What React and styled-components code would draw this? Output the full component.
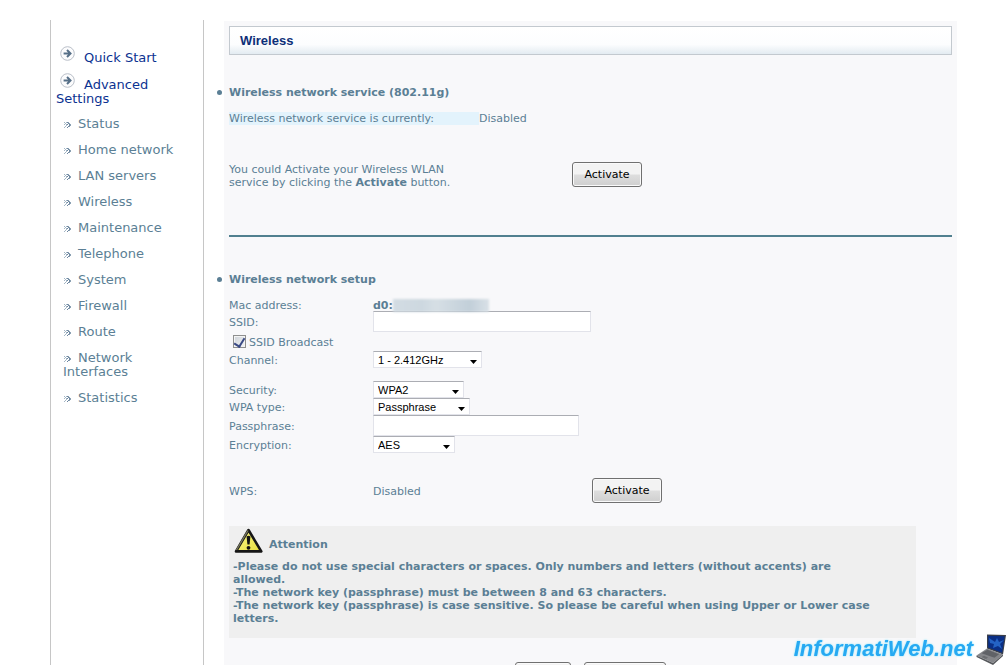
import styled, { createGlobalStyle } from "styled-components";

const MENU = [
  "Status",
  "Home network",
  "LAN servers",
  "Wireless",
  "Maintenance",
  "Telephone",
  "System",
  "Firewall",
  "Route",
  "Network Interfaces",
  "Statistics",
];

const CircleArrow = () => (
  <CircleIcon width="15" height="15" viewBox="0 0 15 15" aria-hidden="true">
    <circle cx="7.5" cy="7.5" r="6.8" fill="#fcfcfd" stroke="#b9bfc8" />
    <path
      d="M3.6 7.5h6M7 4l3.500 3.500L7 11"
      fill="none"
      stroke="#566f87"
      strokeWidth="2"
    />
  </CircleIcon>
);

const Chevrons = () => (
  <ChevronIcon width="7" height="6" viewBox="0 0 7 6" aria-hidden="true">
    <path
      d="M0 0h1v1H0zM1 1h1v1H1zM2 2h1v2H2zM1 4h1v1H1zM0 5h1v1H0zM2 0h1v1H2zM0 2h1v1H0z"
      fill="#a3b6c5"
    />
    <path
      d="M3 0h1v1H3zM4 1h1v1H4zM5 2h1v2H5zM4 4h1v1H4zM3 5h1v1H3zM3 2h1v1H3z"
      fill="#6c86a0"
    />
    <path d="M4 0h1v1H4zM5 1h1v1H5zM6 2h1v2H6zM5 4h1v1H5z" fill="#8ba1b3" />
  </ChevronIcon>
);

const WarningIcon = () => (
  <svg width="30" height="26" viewBox="0 0 30 26" aria-hidden="true">
    <defs>
      <linearGradient id="warn" x1="0" y1="0" x2="1" y2="1">
        <stop offset="0" stopColor="#fbf98c" />
        <stop offset="1" stopColor="#e6dc3c" />
      </linearGradient>
    </defs>
    <path
      d="M14.5 2L27.3 23.4H2z"
      fill="url(#warn)"
      stroke="#161616"
      strokeWidth="2.6"
      strokeLinejoin="round"
    />
    <path d="M14 2.500L2.500 22" stroke="#77775f" strokeWidth="1.4" fill="none" />
    <path d="M12.600 8.500q1.900-1.600 3.800 0l-.8 8h-2.200z" fill="#111" />
    <circle cx="14.5" cy="19.8" r="1.9" fill="#111" />
  </svg>
);

const Laptop = () => (
  <svg width="32" height="32" viewBox="0 0 32 32" aria-hidden="true">
    <path d="M12 1.500L31 2l-3 19.500-16-6z" fill="#3b3f49" />
    <path d="M13.200 2.800l16.500.5-2.600 16.400-13.900-5.200z" fill="#0a2f86" />
    <path d="M14 5l6 4 2-4 2 4 5-2-4 4 2 5-4-3-5 2 1-4-4-1z" fill="#2463c4" />
    <path d="M12 15.500l16 6L18 30 1.500 22.500z" fill="#85868a" />
    <path d="M12.500 16.800l11.500 4.500-4.500 3.500-13-4.600z" fill="#606267" />
    <path d="M9 22.800l4 1.700-2 1.500-4.500-2z" fill="#6a6c70" />
    <path d="M1.500 22.500L18 30l10-8.500v1.500L18 32 1.500 24z" fill="#55575b" />
  </svg>
);

const Dropdown = ({ id, width, options }) => (
  <SelectWrap $width={width}>
    <Select id={id}>
      {options.map((option) => (
        <option key={option}>{option}</option>
      ))}
    </Select>
    <svg width="7" height="4" viewBox="0 0 7 4" aria-hidden="true">
      <path d="M0 0h7L3.500 4z" fill="#000" />
    </svg>
  </SelectWrap>
);

const App = () => (
  <>
    <GlobalStyle />
    <Page>
      <Sidebar>
        <MainMenu>
          <li>
            <MainLink href="#quick">
              <CircleArrow />
              Quick Start
            </MainLink>
          </li>
          <li>
            <MainLink href="#advanced">
              <CircleArrow />
              Advanced Settings
            </MainLink>
          </li>
        </MainMenu>
        <SubMenu>
          {MENU.map((label) => (
            <li key={label}>
              <SubLink href="#menu">
                <Chevrons />
                {label}
              </SubLink>
            </li>
          ))}
        </SubMenu>
      </Sidebar>

      <Content>
        <TitleBar>Wireless</TitleBar>

        <Service>
          <Heading>Wireless network service (802.11g)</Heading>
          <Status>
            <StatusLabel>Wireless network service is currently:</StatusLabel>
            <span>Disabled</span>
          </Status>
          <ActivateRow>
            <Hint>
              You could Activate your Wireless WLAN service by clicking the{" "}
              <b>Activate</b> button.
            </Hint>
            <Button type="button">Activate</Button>
          </ActivateRow>
        </Service>

        <Divider />

        <Setup>
          <Heading>Wireless network setup</Heading>
          <Row $height={12}>
            <span>Mac address:</span>
            <Mac>
              d0:
              <Hidden />
            </Mac>
          </Row>
          <Row $height={21}>
            <Label htmlFor="ssid">SSID:</Label>
            <TextInput id="ssid" type="text" $width={218} />
          </Row>
          <CheckRow>
            <Checkbox id="broadcast" type="checkbox" defaultChecked />
            <Label htmlFor="broadcast">SSID Broadcast</Label>
          </CheckRow>
          <Row $height={17}>
            <Label htmlFor="channel">Channel:</Label>
            <Dropdown id="channel" width={109} options={["1 - 2.412GHz"]} />
          </Row>
          <Security>
            <Row $height={17}>
              <Label htmlFor="security">Security:</Label>
              <Dropdown id="security" width={91} options={["WPA2"]} />
            </Row>
            <Row $height={17}>
              <Label htmlFor="wpa">WPA type:</Label>
              <Dropdown id="wpa" width={97} options={["Passphrase"]} />
            </Row>
            <Row $height={21}>
              <Label htmlFor="passphrase">Passphrase:</Label>
              <TextInput id="passphrase" type="text" $width={206} />
            </Row>
            <Row $height={17}>
              <Label htmlFor="encryption">Encryption:</Label>
              <Dropdown id="encryption" width={82} options={["AES"]} />
            </Row>
          </Security>
          <WpsRow>
            <Label as="span">WPS:</Label>
            <Label as="span">Disabled</Label>
            <Button type="button">Activate</Button>
          </WpsRow>
        </Setup>

        <Notice>
          <NoticeTitle>
            <WarningIcon />
            Attention
          </NoticeTitle>
          <p>
            -Please do not use special characters or spaces. Only numbers and
            letters (without accents) are allowed.
          </p>
          <p>-The network key (passphrase) must be between 8 and 63 characters.</p>
          <p>
            -The network key (passphrase) is case sensitive. So please be careful
            when using Upper or Lower case letters.
          </p>
        </Notice>

        <Actions>
          <Button type="submit" $width={56}>
            Save
          </Button>
          <Button type="reset" $width={82}>
            Cancel
          </Button>
        </Actions>
      </Content>
    </Page>
    <Brand>
      InformatiWeb.net
      <Laptop />
    </Brand>
  </>
);

const GlobalStyle = createGlobalStyle`
  * {
    box-sizing: border-box;
  }

  html {
    scrollbar-width: none;
  }

  body {
    margin: 0;
    background: #fff;
    color: #5b7f95;
    font: 11px/13px "DejaVu Sans", Verdana, sans-serif;
  }

  ul, p, h1, h2 {
    margin: 0;
    padding: 0;
  }
`;

const Page = styled.div`
  display: flex;
  min-height: 100vh;
  padding: 20px 50px 0;
`;

const Sidebar = styled.nav`
  flex: 0 0 154px;
  margin-right: 20px;
  padding: 26px 8px 0 5px;
  border: solid #c6c6c6;
  border-width: 0 1px;
  font-size: 13px;
  line-height: 14px;
`;

const MainMenu = styled.ul`
  display: flex;
  flex-direction: column;
  gap: 8px;
  list-style: none;
`;

const SubMenu = styled.ul`
  display: flex;
  flex-direction: column;
  gap: 12px;
  margin-top: 11px;
  padding-left: 7px;
  list-style: none;
`;

const MainLink = styled.a`
  color: #0b3291;
  text-decoration: none;
`;

const SubLink = styled.a`
  color: #5b7f95;
  text-decoration: none;
`;

const CircleIcon = styled.svg`
  margin: 0 9px 0 4px;
  vertical-align: 1px;
`;

const ChevronIcon = styled.svg`
  margin: 0 7px 0 1px;
  vertical-align: 0;
`;

const Content = styled.main`
  flex: 1;
  min-width: 0;
  margin-top: 1px;
  padding: 5px 5px 20px;
  background: #f8f8fa;
`;

const TitleBar = styled.h1`
  height: 29px;
  padding-left: 10px;
  border: 1px solid #c3c9cf;
  background: linear-gradient(#fff, #fcfdfe 65%, #e3ebf1);
  color: #0d2f78;
  font: bold 13px/27px "Liberation Sans", Arial, sans-serif;
`;

const Service = styled.section`
  padding-top: 31px;
`;

const Setup = styled.section`
  padding-top: 36px;
`;

/* the bullet hangs in the gutter, left of the panel */
const Heading = styled.h2`
  position: relative;
  margin-bottom: 12px;
  font-size: 11px;
  line-height: 14px;

  &::before {
    content: "";
    position: absolute;
    top: 4px;
    left: -12px;
    width: 5px;
    height: 5px;
    border-radius: 50%;
    background: #5b7f95;
  }
`;

const Status = styled.div`
  display: flex;
`;

const StatusLabel = styled.span`
  width: 250px;
  background: #e3f3fc;
`;

const ActivateRow = styled.div`
  display: flex;
  align-items: flex-start;
  margin-top: 37px;
`;

const Hint = styled.p`
  width: 240px;
  margin-right: 103px;

  && {
    padding-top: 1px;
  }
`;

const Button = styled.button`
  width: ${({ $width = 70 }) => $width}px;
  height: 25px;
  padding: 0;
  border: 1px solid #707070;
  border-radius: 3px;
  background: linear-gradient(#f3f3f3 0 48%, #dedede 52%, #cfcfcf);
  box-shadow: inset 0 0 0 1px #fafafa;
  color: #000;
  font: 11px "DejaVu Sans", Verdana, sans-serif;
`;

const Divider = styled.hr`
  height: 2px;
  margin: 46px 0 0;
  border: 0;
  background: #51808f;
`;

const Row = styled.div`
  display: grid;
  grid-template-columns: 144px 1fr;
  align-items: center;
  height: ${({ $height }) => $height}px;
`;

const Label = styled.label`
  padding-top: 2px;
`;

const Security = styled.div`
  margin-top: 13px;
`;

const CheckRow = styled.div`
  display: flex;
  align-items: center;
  gap: 3px;
  height: 19px;
  padding-left: 4px;
`;

const WpsRow = styled.div`
  display: grid;
  grid-template-columns: 144px 219px auto;
  justify-content: start;
  align-items: center;
  margin-top: 25px;
`;

const Mac = styled.b`
  display: flex;
  align-items: center;
`;

const Hidden = styled.span`
  width: 96px;
  height: 13px;
  background: linear-gradient(90deg, #d3dce3, #cdd8e0 30%, #d6dfe5 45%, #c2cfd9 80%, #d9e1e7);
  filter: blur(1px);
`;

const TextInput = styled.input`
  width: ${({ $width }) => $width}px;
  height: 21px;
  border: 1px solid #e2e3ea;
  border-top-color: #abadb3;
  background: #fff;
  font: 11px "Liberation Sans", Arial, sans-serif;
`;

const SelectWrap = styled.div`
  position: relative;
  width: ${({ $width }) => $width}px;
  height: 17px;

  svg {
    position: absolute;
    right: 5px;
    bottom: 4px;
    pointer-events: none;
  }
`;

const Select = styled.select`
  display: block;
  width: 100%;
  height: 17px;
  padding: 0 4px;
  appearance: none;
  border: 1px solid #e2e3ea;
  border-top-color: #abadb3;
  border-radius: 0;
  background: #fff;
  color: #000;
  font: 11px "Liberation Sans", Arial, sans-serif;
`;

const Checkbox = styled.input`
  display: grid;
  place-items: center;
  width: 13px;
  height: 13px;
  margin: 0;
  appearance: none;
  border: 1px solid #8e8f8f;
  background: linear-gradient(135deg, #cdd2d8, #f4f5f6);
  box-shadow: inset 0 0 0 1px #f4f4f4;

  &:checked::after {
    content: "";
    width: 5px;
    height: 9px;
    margin-bottom: 2px;
    border: solid #3a4a85;
    border-width: 0 2px 2px 0;
    transform: rotate(32deg);
  }
`;

const Notice = styled.aside`
  margin: 23px 36px 0 0;
  padding: 2px 34px 13px 4px;
  background: #efefef;
  font-weight: bold;
`;

const NoticeTitle = styled.h2`
  display: flex;
  align-items: flex-end;
  gap: 5px;
  height: 26px;
  margin-bottom: 6px;
  padding-left: 1px;
  font-size: 11px;
  line-height: 19px;
`;

const Actions = styled.div`
  display: flex;
  justify-content: center;
  gap: 13px;
  margin-top: 24px;
`;

const Brand = styled.div`
  position: fixed;
  right: 0;
  bottom: 0;
  display: flex;
  align-items: center;
  gap: 2px;
  color: #27a9f2;
  font: italic bold 22px/30px "Liberation Sans", Arial, sans-serif;
  text-shadow: 0 0 2px #6fe0fb;
`;

export default App;
